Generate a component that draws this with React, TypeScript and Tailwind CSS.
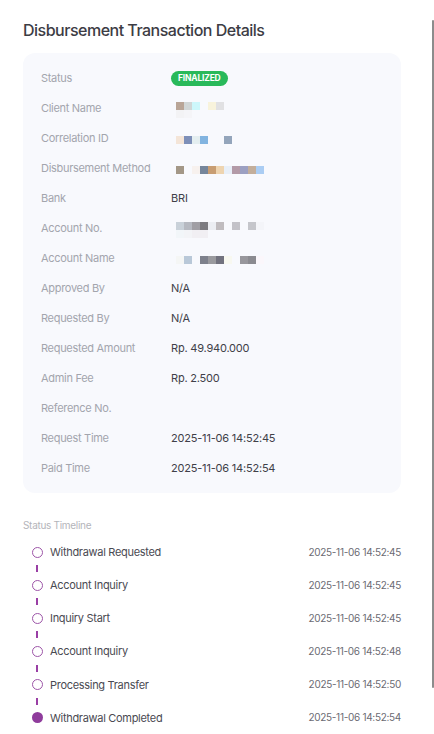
import React from "react";

type Cell = string | null;

const mosaics: Record<string, Cell[][]> = {
  client: [
    ["#b9a597", "#d1d6d6", "#cdf7fb", null, "#f8f3dc", "#e1e1e3"],
    ["#f3f3f5", "#f5f5f8"],
  ],
  correlation: [["#f4e5d8", "#7d8fb8", "#e4eef0", "#82b4e0", null, null, "#94a5bb"]],
  method: [
    ["#a39787", null, "#f7f1ee", "#76869b", "#c89d72", "#eed4b0", "#e8eff8", "#b39aa7", "#9ca0c2", "#c3ae9b", "#abcdf3"],
  ],
  accountNo: [
    ["#c9d1d9", "#b6b9c1", "#a09ea4", "#7c7b80", "#eceef3", "#c0bcbf", null, "#c3c2c8", null, "#c5c6cb", "#f4f5f9"],
    ["#f2f6f9", "#f3f4f7", "#f1eff3", "#f1eff3"],
  ],
  accountName: [
    ["#f5f6f5", "#b9c8d8", null, "#7e818c", "#9a9a9e", "#72727e", "#f8f8f0", null, "#98979c", "#8b8b90", "#fbf7fb"],
  ],
};

function Mosaic({ rows }: { rows: Cell[][] }) {
  return (
    <div className="flex flex-col pl-[5px] pt-[4px]">
      {rows.map((r, i) => (
        <div key={i} className="flex h-[8px]">
          {r.map((c, j) => (
            <div
              key={j}
              className="w-[8px] h-[8px]"
              style={{ backgroundColor: c ?? "transparent" }}
            />
          ))}
        </div>
      ))}
    </div>
  );
}

const details: { label: string; value?: React.ReactNode }[] = [
  {
    label: "Status",
    value: (
      <span className="inline-flex items-center h-[15px] px-[7px] rounded-full bg-[#29b95a] text-white text-[8.5px] font-bold tracking-[-0.2px]">
        FINALIZED
      </span>
    ),
  },
  { label: "Client Name", value: <Mosaic rows={mosaics.client} /> },
  { label: "Correlation ID", value: <Mosaic rows={mosaics.correlation} /> },
  { label: "Disbursement Method", value: <Mosaic rows={mosaics.method} /> },
  { label: "Bank", value: "BRI" },
  { label: "Account No.", value: <Mosaic rows={mosaics.accountNo} /> },
  { label: "Account Name", value: <Mosaic rows={mosaics.accountName} /> },
  { label: "Approved By", value: "N/A" },
  { label: "Requested By", value: "N/A" },
  { label: "Requested Amount", value: "Rp. 49.940.000" },
  { label: "Admin Fee", value: "Rp. 2.500" },
  { label: "Reference No." },
  { label: "Request Time", value: "2025-11-06 14:52:45" },
  { label: "Paid Time", value: "2025-11-06 14:52:54" },
];

const timeline = [
  { title: "Withdrawal Requested", time: "2025-11-06 14:52:45" },
  { title: "Account Inquiry", time: "2025-11-06 14:52:45" },
  { title: "Inquiry Start", time: "2025-11-06 14:52:45" },
  { title: "Account Inquiry", time: "2025-11-06 14:52:48" },
  { title: "Processing Transfer", time: "2025-11-06 14:52:50" },
  { title: "Withdrawal Completed", time: "2025-11-06 14:52:54" },
];

export default function App() {
  return (
    <div className="relative w-[434px] h-[734px] bg-white overflow-hidden font-['Inter',sans-serif] text-[#3f3f46]">
      <div className="pl-[23px] pr-[33px] pt-[20px]">
        <h1 className="text-[16px] leading-[20px] font-medium tracking-[-0.5px] text-[#3c3c44]">
          Disbursement Transaction Details
        </h1>

        {/* details card */}
        <div className="mt-[13px] rounded-[12px] bg-[#f8f9fd] pl-[18px] pt-[17px] pb-[17px] flex flex-col gap-[14px]">
          {details.map((d) => (
            <div key={d.label} className="flex items-center h-[16px]">
              <div className="w-[130px] shrink-0 text-[11px] tracking-[-0.3px] text-[#a3a5ad]">
                {d.label}
              </div>
              <div className="text-[11px] tracking-[-0.2px] text-[#404048] h-[16px] flex items-center">
                {d.value}
              </div>
            </div>
          ))}
        </div>

        {/* timeline */}
        <div className="mt-[25px] text-[10px] tracking-[-0.3px] text-[#b4b4ba]">Status Timeline</div>
        <div className="mt-[12px] flex flex-col">
          {timeline.map((t, i) => {
            const last = i === timeline.length - 1;
            return (
              <div key={i} className="flex flex-col">
                <div className="flex items-center h-[14px]">
                  <div className="w-[27px] flex justify-center pl-[1px]">
                    <div
                      className={
                        last
                          ? "w-[11px] h-[11px] rounded-full bg-[#8f3c9c]"
                          : "w-[11px] h-[11px] rounded-full border-[1.5px] border-[#9d55a8]"
                      }
                    />
                  </div>
                  <div className="flex-1 text-[11px] tracking-[-0.3px] text-[#4a4a52]">{t.title}</div>
                  <div className="text-[10px] tracking-[-0.3px] text-[#6b6b73]">{t.time}</div>
                </div>
                {!last && (
                  <div className="h-[19.2px] w-[27px] flex justify-center items-center pl-[1px]">
                    <div className="w-[2px] h-[7px] bg-[#9a3fa5]" />
                  </div>
                )}
              </div>
            );
          })}
        </div>
      </div>

      {/* scrollbar thumb */}
      <div className="absolute left-[432px] top-[20px] w-[2px] h-[668px] bg-[#8c8c8c] rounded-full" />
    </div>
  );
}
